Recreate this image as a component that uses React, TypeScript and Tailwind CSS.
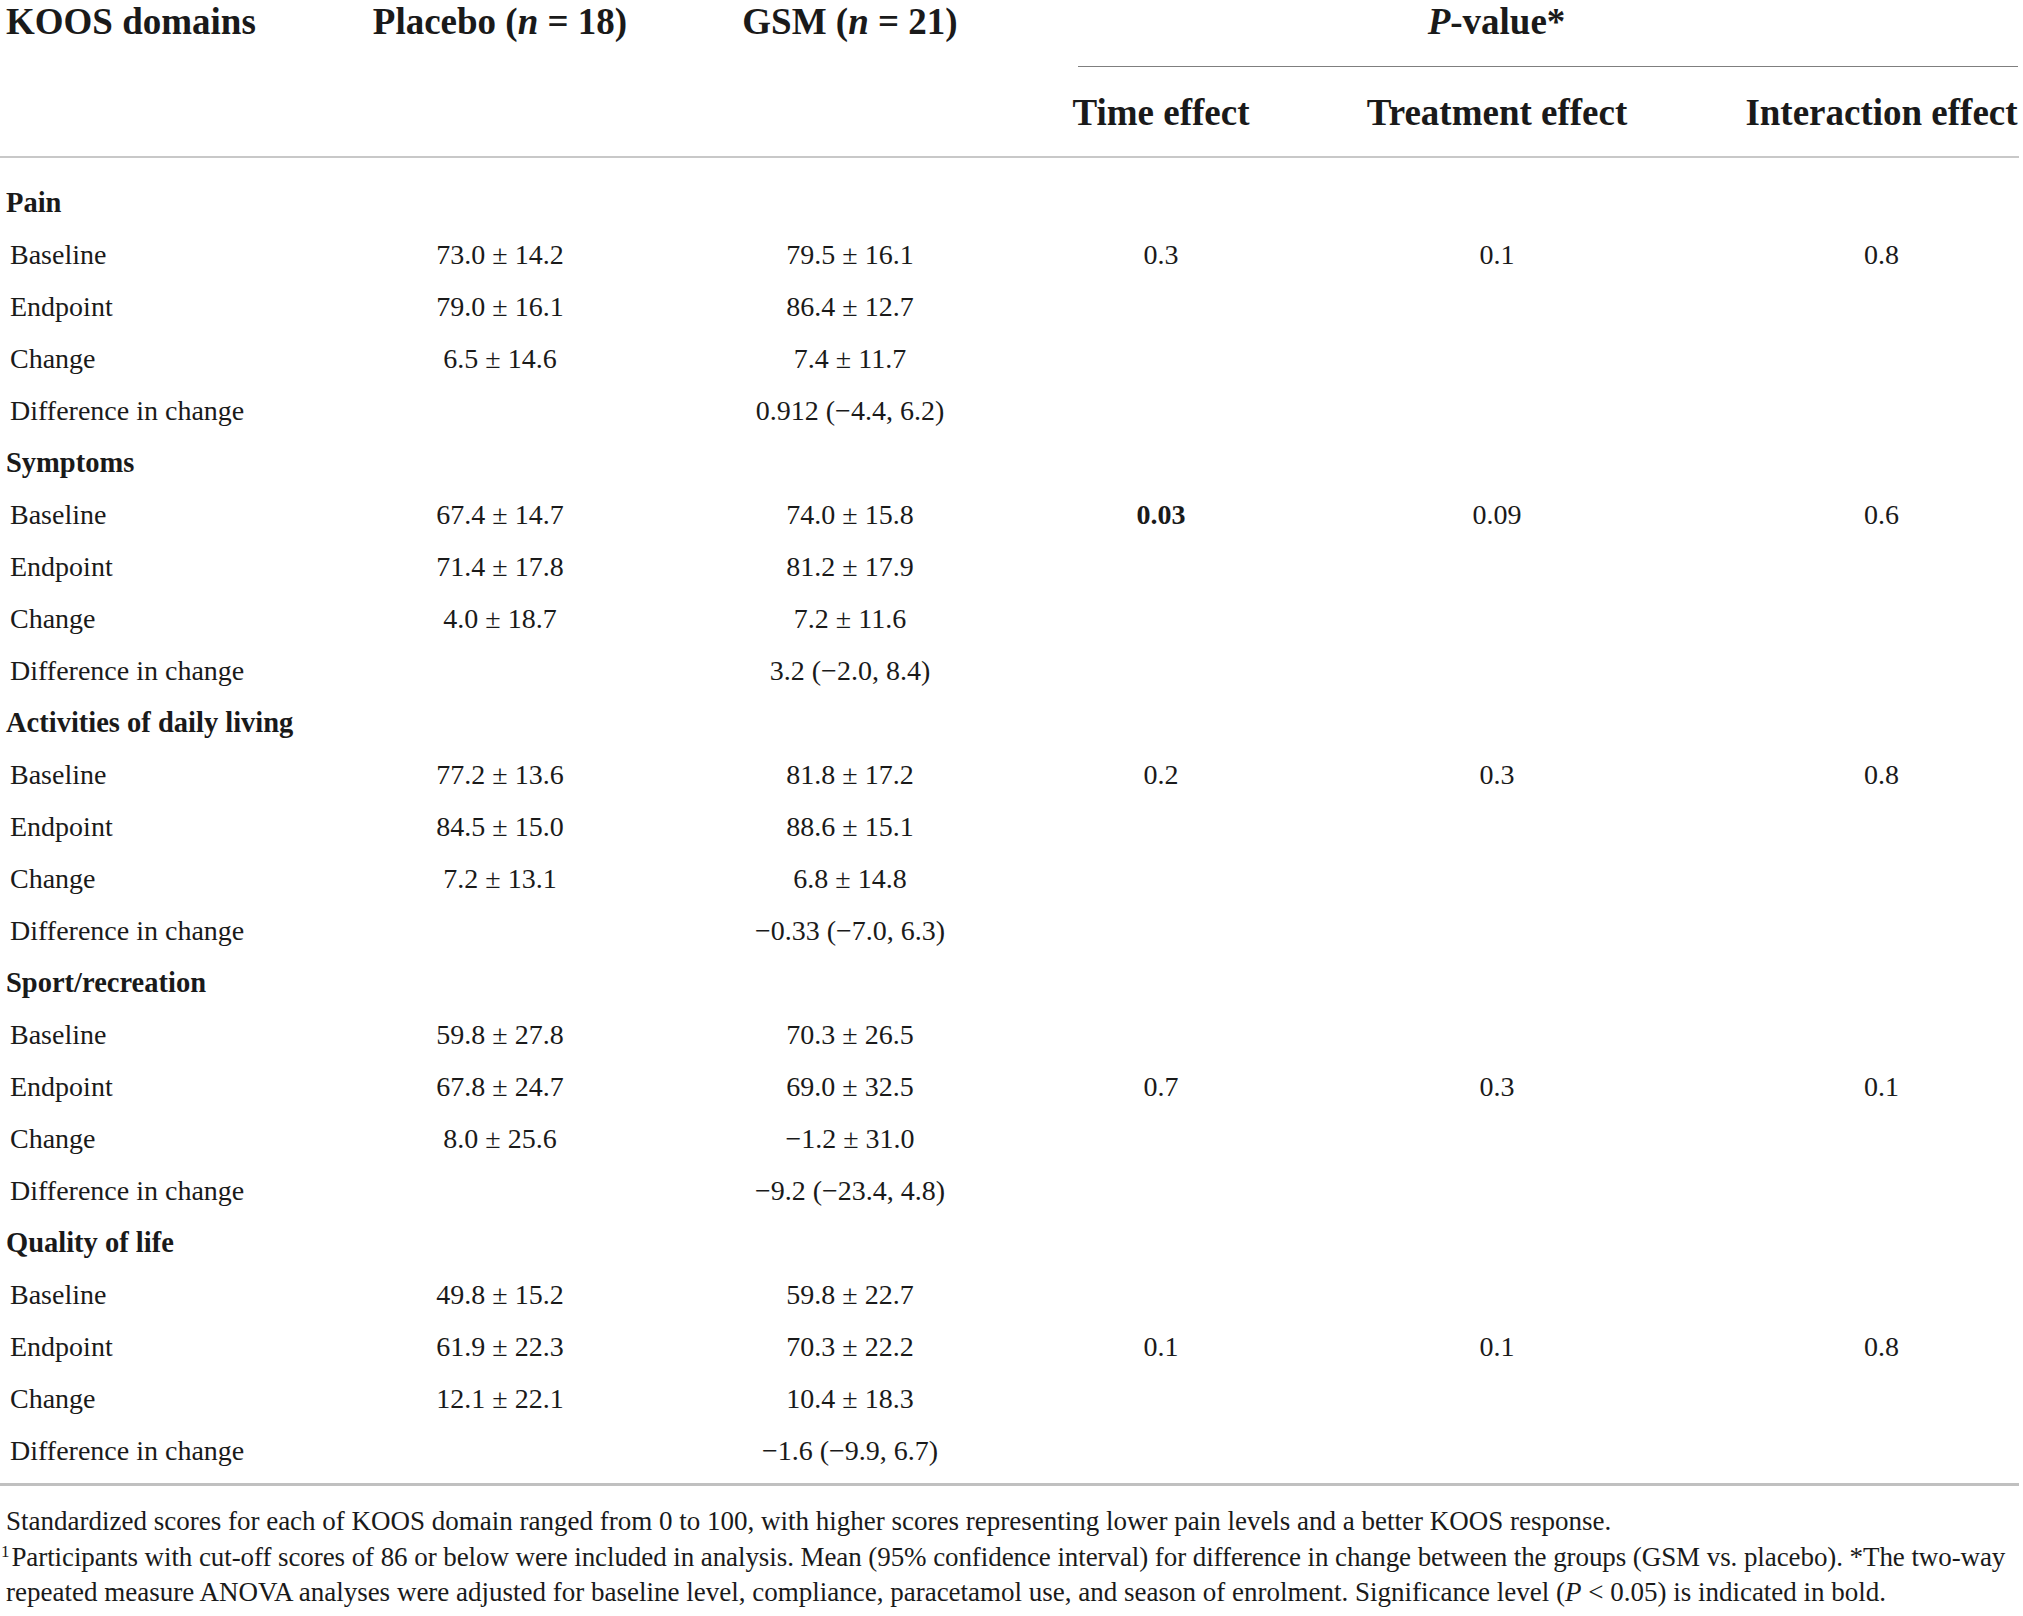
const cols = "grid grid-cols-[300px_400px_300px_322px_350px_351px]";

type Group = {
  name: string;
  rows: [string, string, string][];
  pRow: number;
  p: [string, string, string];
  boldTime?: boolean;
};

const groups: Group[] = [
  {
    name: "Pain",
    rows: [
      ["Baseline", "73.0 ± 14.2", "79.5 ± 16.1"],
      ["Endpoint", "79.0 ± 16.1", "86.4 ± 12.7"],
      ["Change", "6.5 ± 14.6", "7.4 ± 11.7"],
      ["Difference in change", "", "0.912 (−4.4, 6.2)"],
    ],
    pRow: 0,
    p: ["0.3", "0.1", "0.8"],
  },
  {
    name: "Symptoms",
    rows: [
      ["Baseline", "67.4 ± 14.7", "74.0 ± 15.8"],
      ["Endpoint", "71.4 ± 17.8", "81.2 ± 17.9"],
      ["Change", "4.0 ± 18.7", "7.2 ± 11.6"],
      ["Difference in change", "", "3.2 (−2.0, 8.4)"],
    ],
    pRow: 0,
    p: ["0.03", "0.09", "0.6"],
    boldTime: true,
  },
  {
    name: "Activities of daily living",
    rows: [
      ["Baseline", "77.2 ± 13.6", "81.8 ± 17.2"],
      ["Endpoint", "84.5 ± 15.0", "88.6 ± 15.1"],
      ["Change", "7.2 ± 13.1", "6.8 ± 14.8"],
      ["Difference in change", "", "−0.33 (−7.0, 6.3)"],
    ],
    pRow: 0,
    p: ["0.2", "0.3", "0.8"],
  },
  {
    name: "Sport/recreation",
    rows: [
      ["Baseline", "59.8 ± 27.8", "70.3 ± 26.5"],
      ["Endpoint", "67.8 ± 24.7", "69.0 ± 32.5"],
      ["Change", "8.0 ± 25.6", "−1.2 ± 31.0"],
      ["Difference in change", "", "−9.2 (−23.4, 4.8)"],
    ],
    pRow: 1,
    p: ["0.7", "0.3", "0.1"],
  },
  {
    name: "Quality of life",
    rows: [
      ["Baseline", "49.8 ± 15.2", "59.8 ± 22.7"],
      ["Endpoint", "61.9 ± 22.3", "70.3 ± 22.2"],
      ["Change", "12.1 ± 22.1", "10.4 ± 18.3"],
      ["Difference in change", "", "−1.6 (−9.9, 6.7)"],
    ],
    pRow: 1,
    p: ["0.1", "0.1", "0.8"],
  },
];

export default function App() {
  return (
    <div className="w-[2023px] bg-white text-[#1a1a1a] font-['Liberation_Serif',serif]">
      {/* header */}
      <div className={cols + " text-[37px] font-bold leading-[44px]"}>
        <div className="pl-[6px] whitespace-nowrap">KOOS domains</div>
        <div className="text-center whitespace-nowrap">
          Placebo (<i>n</i> = 18)
        </div>
        <div className="text-center whitespace-nowrap">
          GSM (<i>n</i> = 21)
        </div>
        <div className="col-span-3 flex flex-col">
          <div className="text-center pr-[30px]">
            <i>P</i>-value*
          </div>
          <div className="mt-[22px] ml-[78px] mr-[5px] h-px bg-[#7f7f7f]" />
          <div className="mt-[24px] grid grid-cols-[322px_350px_351px] whitespace-nowrap">
            <div className="text-center">Time effect</div>
            <div className="text-center">Treatment effect</div>
            <div className="text-center pl-[68px]">Interaction effect</div>
          </div>
        </div>
      </div>
      <div className="mt-[21px] mr-[4px] h-[2px] bg-[#c8c8c8]" />

      {/* body */}
      <div className="pt-[19px] pb-[6px] text-[28px]">
        {groups.map((g) => (
          <div key={g.name}>
            <div className={cols + " h-[52px] items-center"}>
              <div className="pl-[6px] font-bold text-[28.5px] whitespace-nowrap">{g.name}</div>
            </div>
            {g.rows.map((r, i) => (
              <div key={r[0]} className={cols + " h-[52px] items-center"}>
                <div className="pl-[10px] whitespace-nowrap">{r[0]}</div>
                <div className="text-center">{r[1]}</div>
                <div className="text-center">{r[2]}</div>
                <div className={"text-center " + (g.boldTime ? "font-bold" : "")}>
                  {i === g.pRow ? g.p[0] : ""}
                </div>
                <div className="text-center">{i === g.pRow ? g.p[1] : ""}</div>
                <div className="text-center pl-[68px]">{i === g.pRow ? g.p[2] : ""}</div>
              </div>
            ))}
          </div>
        ))}
      </div>
      <div className="mr-[4px] h-[3px] bg-[#c0c0c0]" />

      {/* notes */}
      <div className="pt-[18px] pl-[6px] text-[27px] leading-[35.5px] whitespace-nowrap">
        <div>
          Standardized scores for each of KOOS domain ranged from 0 to 100, with higher scores representing lower pain levels and a better KOOS response.
        </div>
        <div className="-ml-[5px] tracking-[-0.08px]">
          <sup className="text-[17px] mr-[2px]">1</sup>Participants with cut-off scores of 86 or below were included in analysis. Mean (95% confidence interval) for difference in change between the groups (GSM vs. placebo). *The two-way
        </div>
        <div>
          repeated measure ANOVA analyses were adjusted for baseline level, compliance, paracetamol use, and season of enrolment. Significance level (<i>P</i> &lt; 0.05) is indicated in bold.
        </div>
      </div>
    </div>
  );
}
